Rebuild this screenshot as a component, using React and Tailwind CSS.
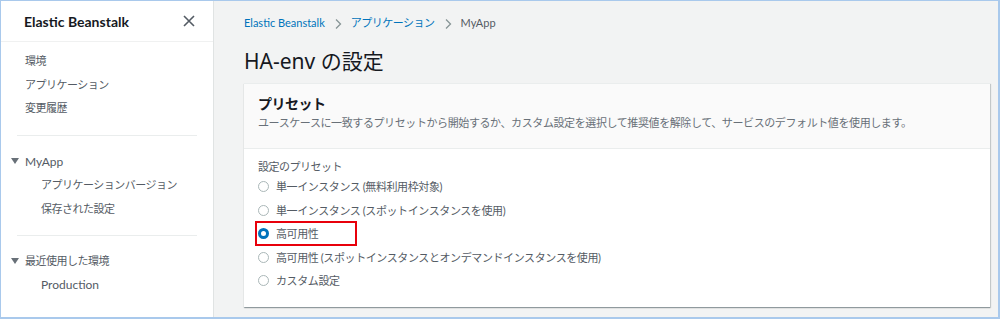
import React from "react";

const font = { fontFamily: 'Lato, "Noto Sans CJK JP", sans-serif' };

function Radio({ checked }) {
  return checked ? (
    <span className="w-[11px] h-[11px] rounded-full border-[3px] border-[#0073bb] bg-white shrink-0" />
  ) : (
    <span className="w-[11px] h-[11px] rounded-full border border-[#aab7b8] bg-white shrink-0" />
  );
}

function Chevron() {
  return (
    <svg width="8" height="12" viewBox="0 0 8 12" className="mx-[9px]">
      <path d="M2 1.5 L6.5 6 L2 10.5" fill="none" stroke="#879596" strokeWidth="1.3" />
    </svg>
  );
}

function Caret() {
  return (
    <svg width="8" height="6" viewBox="0 0 8 6" className="mr-[6px]">
      <path d="M0 0 H8 L4 6 Z" fill="#687078" />
    </svg>
  );
}

export default function App() {
  const presets = [
    "単一インスタンス (無料利用枠対象)",
    "単一インスタンス (スポットインスタンスを使用)",
    "高可用性",
    "高可用性 (スポットインスタンスとオンデマンドインスタンスを使用)",
    "カスタム設定",
  ];

  return (
    <div
      className="w-[1000px] h-[319px] border-[#a9c9ec] border-l border-t border-r-2 border-b-2 bg-[#f2f3f3] flex overflow-hidden text-[#16191f]"
      style={font}
    >
      {/* サイドバー */}
      <div className="w-[213px] h-full bg-white border-r border-[#e0e3e3] shrink-0 flex flex-col">
        <div className="h-[41px] flex items-center justify-between pl-[23px] pr-[18px] border-b border-[#f0f1f1]">
          <span className="text-[14px] font-bold text-[#16191f]">Elastic Beanstalk</span>
          <svg width="12" height="12" viewBox="0 0 12 12">
            <path d="M1 1 L11 11 M11 1 L1 11" stroke="#545b64" strokeWidth="1.6" />
          </svg>
        </div>
        <div className="flex flex-col text-[11px] tracking-[-0.5px] text-[#545b64] pl-[24px] pt-[7px] leading-[23.5px]">
          <span>環境</span>
          <span>アプリケーション</span>
          <span>変更履歴</span>
        </div>
        <div className="mx-[16px] mt-[15px] border-t border-[#eaeded]" />
        <div className="flex flex-col text-[11px] tracking-[-0.5px] text-[#545b64] pt-[14px] leading-[23.5px]">
          <span className="flex items-center pl-[10px] text-[12px] tracking-normal">
            <Caret />
            MyApp
          </span>
          <span className="pl-[40px]">アプリケーションバージョン</span>
          <span className="pl-[40px]">保存された設定</span>
        </div>
        <div className="mx-[16px] mt-[15px] border-t border-[#eaeded]" />
        <div className="flex flex-col text-[11px] tracking-[-0.5px] text-[#545b64] pt-[13px] leading-[23.5px]">
          <span className="flex items-center pl-[10px]">
            <Caret />
            最近使用した環境
          </span>
          <span className="pl-[40px] text-[12px] tracking-normal">Production</span>
        </div>
      </div>

      {/* メイン */}
      <div className="flex-1 pl-[30px] pr-[8px] flex flex-col">
        <div className="flex items-center text-[11px] h-[46px] pb-[1px]">
          <span className="text-[#0073bb]">Elastic Beanstalk</span>
          <Chevron />
          <span className="text-[#0073bb] tracking-[-0.5px]">アプリケーション</span>
          <Chevron />
          <span className="text-[#545b64]">MyApp</span>
        </div>
        <h1
          className="text-[21px] leading-[28px] text-[#16191f]"
          style={{ fontFamily: '"Noto Sans", "Noto Sans CJK JP", sans-serif' }}
        >
          HA-env の設定
        </h1>
        <div className="mt-[8px] bg-white shadow-[0_1px_1px_0_rgba(0,28,36,0.3),1px_1px_1px_0_rgba(0,28,36,0.15)] border-t border-[#eaeded] flex flex-col h-[224px]">
          <div className="bg-[#fafafa] border-b border-[#eaeded] px-[14px] pt-[10px] pb-[16px]">
            <div className="text-[14px] tracking-[-0.5px] font-bold leading-[20px]">プリセット</div>
            <div className="text-[11px] tracking-[-0.4px] text-[#687078] leading-[18px]">
              ユースケースに一致するプリセットから開始するか、カスタム設定を選択して推奨値を解除して、サービスのデフォルト値を使用します。
            </div>
          </div>
          <div className="px-[14px] pt-[9px]">
            <div className="text-[11px] tracking-[-0.5px] text-[#545b64] leading-[17px]">設定のプリセット</div>
            <div className="flex flex-col">
              {presets.map((p, i) => (
                <div
                  key={i}
                  className="relative flex items-center gap-[7px] text-[11px] tracking-[-0.4px] leading-[23.5px] text-[#545b64]"
                >
                  <Radio checked={i === 2} />
                  {p}
                  {i === 2 && (
                    <span className="absolute -left-[3px] -top-[1px] w-[102px] h-[25px] border-2 border-[#e8000b]" />
                  )}
                </div>
              ))}
            </div>
          </div>
        </div>
      </div>
    </div>
  );
}
